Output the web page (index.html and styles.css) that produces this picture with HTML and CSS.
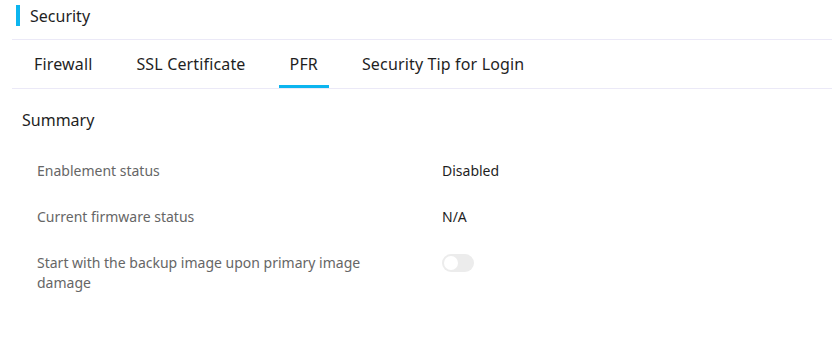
FILE: index.html
```html
<!DOCTYPE html>
<html lang="en">
<head>
    <meta charset="UTF-8">
    <meta name="viewport" content="width=device-width, initial-scale=1.0">
    <title>Security</title>
    <link rel="stylesheet" href="styles.css">
</head>
<body>
    <div class="page">
        <div class="title">Security</div>

        <ul class="tabs">
            <li class="tab">Firewall</li>
            <li class="tab">SSL Certificate</li>
            <li class="tab active">PFR</li>
            <li class="tab">Security Tip for Login</li>
        </ul>

        <div class="section">
            <h2 class="section-title">Summary</h2>
            <div class="row">
                <div class="label">Enablement status</div>
                <div class="value">Disabled</div>
            </div>
            <div class="row">
                <div class="label">Current firmware status</div>
                <div class="value">N/A</div>
            </div>
            <div class="row">
                <div class="label">Start with the backup image upon primary image damage</div>
                <div class="value">
                    <span class="switch"><span class="knob"></span></span>
                </div>
            </div>
        </div>
    </div>
</body>
</html>
```

FILE: styles.css
```css
* {
    margin: 0;
    padding: 0;
    box-sizing: border-box;
}

body {
    font-family: "Noto Sans", "Open Sans", sans-serif;
    color: #1f1f1f;
    background: #fff;
}

.page {
    padding-left: 12px;
}

.title {
    display: flex;
    align-items: center;
    height: 40px;
    padding: 0 0 8px 4px;
    font-size: 16px;
    border-bottom: 1px solid #ebe9f7;
}

.title::before {
    content: "";
    width: 4px;
    height: 21px;
    margin-right: 10px;
    background: #0cb5ef;
}

.tabs {
    display: flex;
    list-style: none;
    gap: 22px;
    padding-left: 11px;
    border-bottom: 1px solid #ebe9f7;
}

.tab {
    height: 48px;
    padding: 3px 11px 0;
    display: flex;
    align-items: center;
    font-size: 16px;
    letter-spacing: 0.15px;
    border-bottom: 3px solid transparent;
}

.tab.active {
    border-bottom-color: #0cb5ef;
}

.section {
    padding: 20px 0 0 10px;
}

.section-title {
    font-size: 16px;
    font-weight: normal;
    margin-bottom: 30px;
}

.row {
    display: flex;
    align-items: flex-start;
    margin-bottom: 26px;
    font-size: 14px;
    line-height: 20px;
}

.label {
    width: 420px;
    padding: 0 75px 0 15px;
    color: #666;
}

.value {
    color: #1f1f1f;
}

.switch {
    display: block;
    width: 32px;
    height: 18px;
    margin-top: 1px;
    border-radius: 9px;
    background: #ececec;
    padding: 2px;
}

.knob {
    display: block;
    width: 14px;
    height: 14px;
    border-radius: 50%;
    background: #fff;
}
```
